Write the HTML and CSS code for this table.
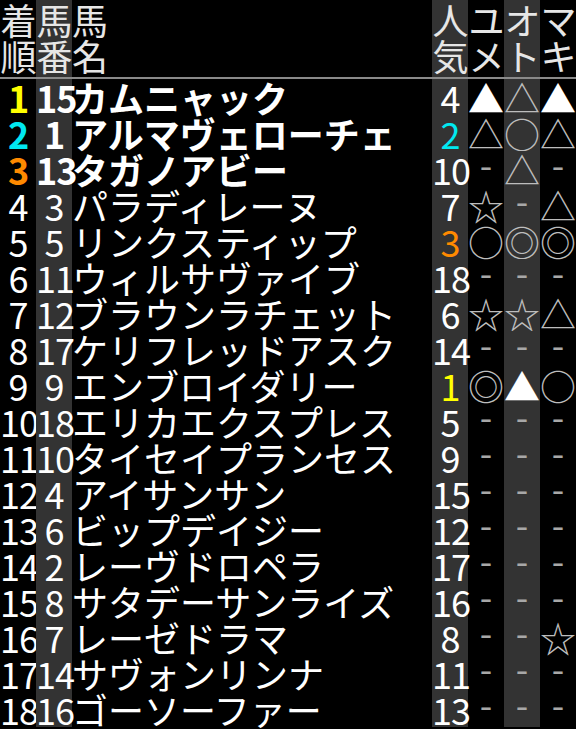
FILE: index.html
```html
<!DOCTYPE html>
<html lang="ja">
<head>
<meta charset="utf-8">
<link rel="stylesheet" href="styles.css">
</head>
<body>
<div class="table">
  <div class="row head">
    <div class="c">着<br>順</div>
    <div class="c g">馬<br>番</div>
    <div class="c name">馬<br>名</div>
    <div class="c g">人<br>気</div>
    <div class="c">ユ<br>メ</div>
    <div class="c g">オ<br>ト</div>
    <div class="c">マ<br>キ</div>
  </div>
  <div class="sep"></div>

  <div class="row b"><div class="c y">1</div><div class="c g">15</div><div class="c name">カムニャック</div><div class="c g p">4</div><div class="c m w">▲</div><div class="c g m">△</div><div class="c m w">▲</div></div>
  <div class="row b"><div class="c cy">2</div><div class="c g">1</div><div class="c name">アルマヴェローチェ</div><div class="c g p cy">2</div><div class="c m">△</div><div class="c g m">○</div><div class="c m">△</div></div>
  <div class="row b"><div class="c o">3</div><div class="c g">13</div><div class="c name">タガノアビー</div><div class="c g p">10</div><div class="c d">-</div><div class="c g m">△</div><div class="c d">-</div></div>
  <div class="row"><div class="c">4</div><div class="c g">3</div><div class="c name">パラディレーヌ</div><div class="c g p">7</div><div class="c m">☆</div><div class="c g d">-</div><div class="c m">△</div></div>
  <div class="row"><div class="c">5</div><div class="c g">5</div><div class="c name">リンクスティップ</div><div class="c g p o">3</div><div class="c m">○</div><div class="c g m">◎</div><div class="c m">◎</div></div>
  <div class="row"><div class="c">6</div><div class="c g">11</div><div class="c name">ウィルサヴァイブ</div><div class="c g p">18</div><div class="c d">-</div><div class="c g d">-</div><div class="c d">-</div></div>
  <div class="row"><div class="c">7</div><div class="c g">12</div><div class="c name">ブラウンラチェット</div><div class="c g p">6</div><div class="c m">☆</div><div class="c g m">☆</div><div class="c m">△</div></div>
  <div class="row"><div class="c">8</div><div class="c g">17</div><div class="c name">ケリフレッドアスク</div><div class="c g p">14</div><div class="c d">-</div><div class="c g d">-</div><div class="c d">-</div></div>
  <div class="row"><div class="c">9</div><div class="c g">9</div><div class="c name">エンブロイダリー</div><div class="c g p y">1</div><div class="c m">◎</div><div class="c g m w">▲</div><div class="c m">○</div></div>
  <div class="row"><div class="c">10</div><div class="c g">18</div><div class="c name">エリカエクスプレス</div><div class="c g p">5</div><div class="c d">-</div><div class="c g d">-</div><div class="c d">-</div></div>
  <div class="row"><div class="c">11</div><div class="c g">10</div><div class="c name">タイセイプランセス</div><div class="c g p">9</div><div class="c d">-</div><div class="c g d">-</div><div class="c d">-</div></div>
  <div class="row"><div class="c">12</div><div class="c g">4</div><div class="c name">アイサンサン</div><div class="c g p">15</div><div class="c d">-</div><div class="c g d">-</div><div class="c d">-</div></div>
  <div class="row"><div class="c">13</div><div class="c g">6</div><div class="c name">ビップデイジー</div><div class="c g p">12</div><div class="c d">-</div><div class="c g d">-</div><div class="c d">-</div></div>
  <div class="row"><div class="c">14</div><div class="c g">2</div><div class="c name">レーヴドロペラ</div><div class="c g p">17</div><div class="c d">-</div><div class="c g d">-</div><div class="c d">-</div></div>
  <div class="row"><div class="c">15</div><div class="c g">8</div><div class="c name">サタデーサンライズ</div><div class="c g p">16</div><div class="c d">-</div><div class="c g d">-</div><div class="c d">-</div></div>
  <div class="row"><div class="c">16</div><div class="c g">7</div><div class="c name">レーゼドラマ</div><div class="c g p">8</div><div class="c d">-</div><div class="c g d">-</div><div class="c m">☆</div></div>
  <div class="row"><div class="c">17</div><div class="c g">14</div><div class="c name">サヴォンリンナ</div><div class="c g p">11</div><div class="c d">-</div><div class="c g d">-</div><div class="c d">-</div></div>
  <div class="row"><div class="c">18</div><div class="c g">16</div><div class="c name">ゴーソーファー</div><div class="c g p">13</div><div class="c d">-</div><div class="c g d">-</div><div class="c d">-</div></div>
</div>
</body>
</html>
```

FILE: styles.css
```css
html, body {
  margin: 0;
  padding: 0;
  background: #000;
}
body {
  width: 576px;
  height: 729px;
  overflow: hidden;
  font-family: "Noto Sans CJK JP", "Noto Sans", sans-serif;
  color: #fff;
}
.table {
  display: flex;
  flex-direction: column;
}
.row {
  display: grid;
  grid-template-columns: 36px 36px 360px 36px 36px 36px 36px;
  height: 36px;
  font-size: 36px;
  line-height: 36px;
}
.head {
  height: 77px;
  color: #e6e6e6;
}
.head .c {
  padding-top: 1px;
  text-align: center;
}
.head .name {
  text-align: left;
}
.sep {
  height: 2px;
  background: #8a8a8a;
}
.c {
  text-align: center;
  white-space: nowrap;
  letter-spacing: -1px;
}
.name {
  text-align: left;
  letter-spacing: 0;
}
.g {
  background: #333;
}
.b {
  font-weight: bold;
}
.p {
  font-weight: normal;
}
.y { color: #ffff00; }
.cy { color: #00e8f0; }
.o { color: #ff8a00; }
.m {
  color: #bdbdbd;
  font-weight: normal;
  letter-spacing: 0;
}
.m.w {
  color: #fff;
}
.d {
  color: #a8a8a8;
  font-weight: normal;
  line-height: 24px;
  letter-spacing: 0;
}
```
